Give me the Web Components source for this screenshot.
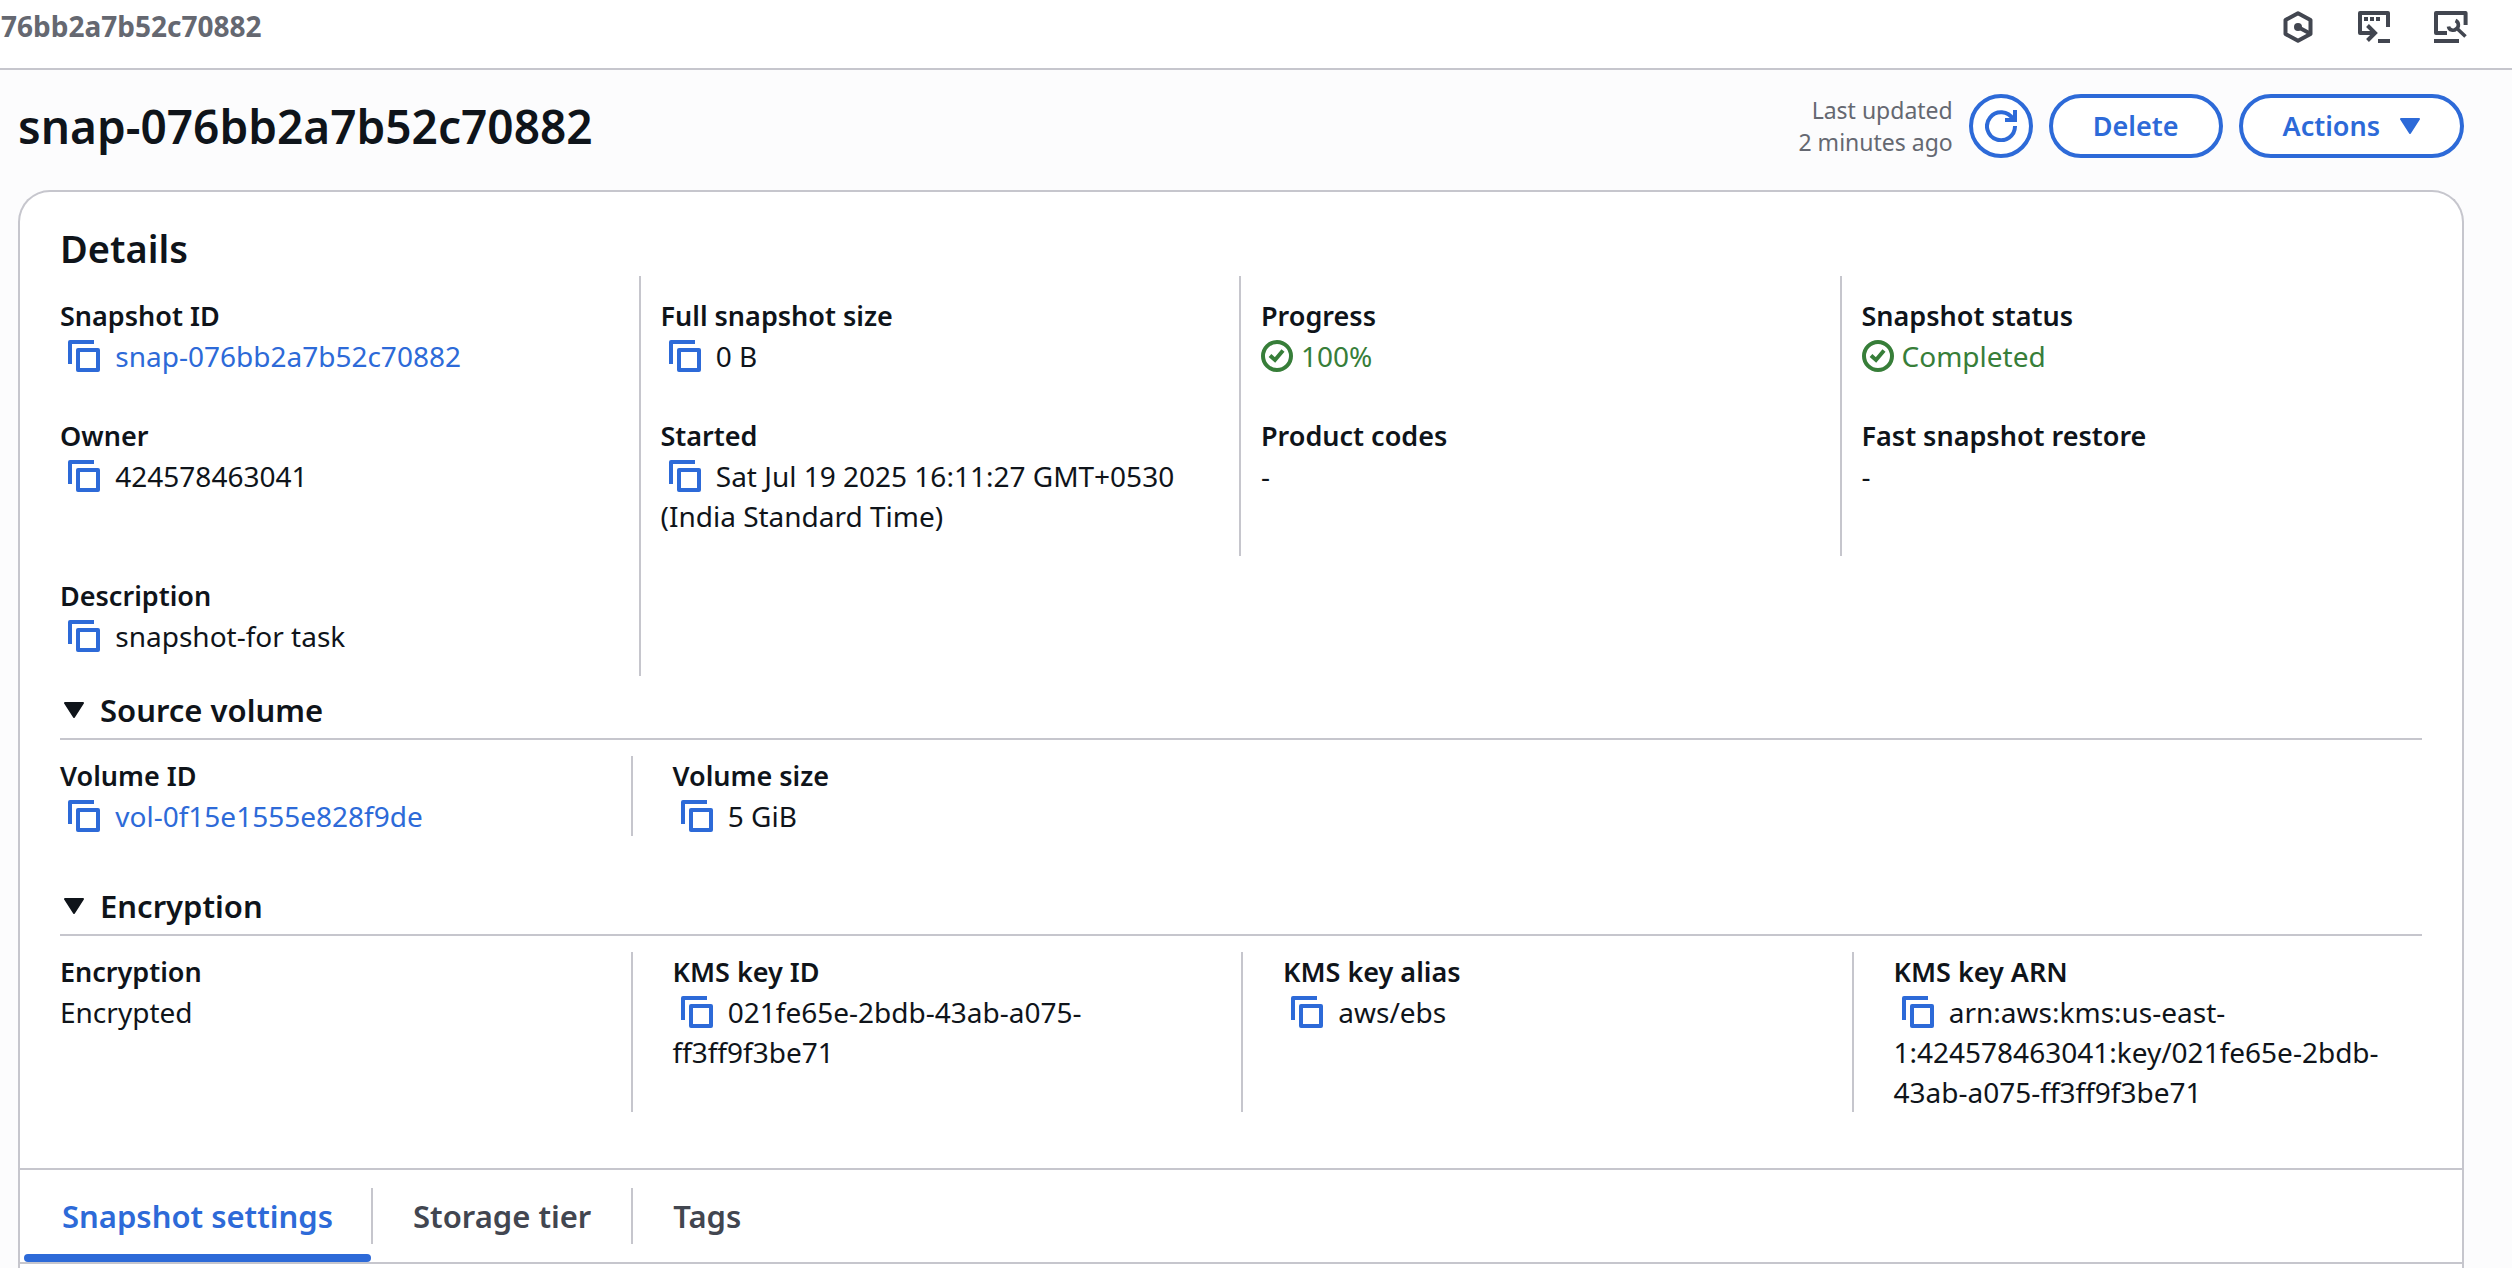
<!DOCTYPE html>
<html lang="en">
<head>
<meta charset="utf-8">
<meta name="viewport" content="width=device-width, initial-scale=1">
<title>snap-076bb2a7b52c70882</title>
<style>
  :root {
    --text: #0f141a;
    --muted: #656871;
    --secondary: #424650;
    --accent: #2d6ad8;
    --success: #377e39;
    --line: #c6c6cd;
    --page: #fcfcfd;
    --bold: 600;
  }
  html { height: 100%; }
  body {
    margin: 0;
    height: 100%;
    overflow: hidden;
    background: var(--page);
    color: var(--text);
    font: 28px/40px "Noto Sans", "Open Sans", sans-serif;
  }
</style>
</head>
<body>
<snapshot-page></snapshot-page>

<script>
const ICONS = {
  copy: '<svg viewBox="0 0 32 32" width="32" height="32" fill="none" stroke="currentColor" stroke-width="4" stroke-linejoin="round"><path d="M2 24V2H26"/><rect x="10" y="10" width="20" height="20"/></svg>',
  check: '<svg viewBox="0 0 32 32" width="32" height="32" fill="none" stroke="currentColor" stroke-width="4"><circle cx="16" cy="16" r="14"/><path d="M9 15.5L14 20L22 10.5"/></svg>',
  refresh: '<svg viewBox="0 0 32 32" width="32" height="32" fill="none" stroke="currentColor" stroke-width="4"><path d="M30 16A14 14 0 1 1 28 9"/><path d="M30 0V10H20"/></svg>',
  caret: '<svg viewBox="0 0 20 16" width="20" height="16" fill="currentColor" stroke="currentColor" stroke-width="2" stroke-linejoin="round"><path d="M1 1H19L10 15Z"/></svg>',
  hexagon: '<svg viewBox="0 0 32 32" width="32" height="32" fill="none" stroke="currentColor" stroke-width="4" stroke-linejoin="round"><path d="M16 2.2L28.5 9V23L16 29.8L3.5 23V9Z"/><path d="M16 16L28 22.5"/><circle cx="16" cy="16" r="4" fill="currentColor" stroke="none"/></svg>',
  shell: '<svg viewBox="0 0 32 32" width="32" height="32" fill="none" stroke="currentColor" stroke-width="4"><path stroke-linejoin="round" d="M30 16V2H2V22H16"/><path d="M9.500 14.500L17 22L9.500 29.500"/><path d="M20 30H32M6 8H10M12 8H16M18 8H22"/></svg>',
  tools: '<svg viewBox="0 0 34 32" width="34" height="32" fill="none" stroke="currentColor" stroke-width="4"><path stroke-linejoin="round" d="M31.600 14V2H2V22H13"/><path d="M0 30H25"/><path stroke-width="3.600" d="M14.500 15.500C15 19.500 20 20.200 22 18C25.500 16 25 11 21.500 9.500M22 16.500L31.500 25.500"/></svg>'
};

class BaseElement extends HTMLElement {
  constructor() {
    super();
    this.attachShadow({ mode: 'open' });
  }
  connectedCallback() {
    this.shadowRoot.innerHTML = '<style>*{box-sizing:border-box}svg{display:block;flex:none}' + this.css() + '</style>' + this.html();
  }
}

customElements.define('top-bar', class extends BaseElement {
  css() {
    return `
      :host { display: flex; justify-content: space-between; height: 70px; box-sizing: border-box; border-bottom: 2px solid var(--line); background: #fff; }
      nav { padding: 6px 0 0 1px; white-space: nowrap; color: var(--muted); font-weight: 700; }
      .tools { display: flex; align-items: flex-start; gap: 44px; padding: 11px 44px 0 0; }
      button { display: block; margin: 0; padding: 0; border: 0; background: none; color: var(--secondary); }`;
  }
  html() {
    return `
      <nav aria-label="Breadcrumb"><span>76bb2a7b52c70882</span></nav>
      <div class="tools">
        <button aria-label="Assistant">${ICONS.hexagon}</button>
        <button aria-label="Shell">${ICONS.shell}</button>
        <button aria-label="Tools">${ICONS.tools}</button>
      </div>`;
  }
});

customElements.define('pill-button', class extends BaseElement {
  css() {
    return `
      :host { display: block; }
      button { display: flex; align-items: center; justify-content: center; gap: 20px; height: 64px; padding: 0 40px; border: 4px solid var(--accent); border-radius: 32px; background: #fff; color: var(--accent); font: inherit; font-size: 27px; font-weight: var(--bold); }
      :host([round]) button { width: 64px; padding: 0; }`;
  }
  html() {
    const icon = this.getAttribute('icon');
    const label = this.getAttribute('label');
    return `<button${label ? ` aria-label="${label}"` : ''}><slot></slot>${icon ? ICONS[icon] : ''}</button>`;
  }
});

customElements.define('page-header', class extends BaseElement {
  css() {
    return `
      :host { display: flex; align-items: center; justify-content: space-between; padding: 24px 48px 32px 18px; }
      h1 { margin: 0; font-size: 46px; line-height: 60px; font-weight: var(--bold); }
      .actions { display: flex; align-items: center; gap: 16px; }
      p { margin: 0; color: var(--muted); font-size: 23px; line-height: 32px; text-align: right; }`;
  }
  html() {
    return `
      <h1><slot></slot></h1>
      <div class="actions">
        <p>Last updated<br>2 minutes ago</p>
        <pill-button round icon="refresh" label="Refresh"></pill-button>
        <pill-button>Delete</pill-button>
        <pill-button icon="caret">Actions</pill-button>
      </div>`;
  }
});

customElements.define('key-value', class extends BaseElement {
  css() {
    return `
      :host { display: block; min-width: 0; }
      .label { font-size: 27px; font-weight: var(--bold); }
      a { color: var(--accent); text-decoration: none; }
      button { display: inline-flex; align-items: center; height: 40px; margin: 0; padding: 0 8px; border: 0; background: none; color: var(--accent); vertical-align: top; }
      .status { display: flex; align-items: center; gap: 8px; color: var(--success); }`;
  }
  html() {
    const kind = this.getAttribute('kind') || '';
    let value = '<slot></slot>';
    if (kind === 'link') value = '<a href="#"><slot></slot></a>';
    if (kind === 'status') value = `<span class="status">${ICONS.check}<slot></slot></span>`;
    if (kind === 'copy' || kind === 'link') value = `<button aria-label="Copy">${ICONS.copy}</button> ${value}`;
    return `<div class="label">${this.getAttribute('label')}</div><div class="value">${value}</div>`;
  }
});

customElements.define('detail-grid', class extends BaseElement {
  css() {
    return `
      :host { display: grid; grid-template-columns: repeat(4, minmax(0, 1fr)); margin: 0 20px; }
      ::slotted(*) { box-sizing: border-box; padding: 20px; border-right: 2px solid var(--line); }
      ::slotted(:nth-child(4n)) { border-right: 0; }`;
  }
  html() { return '<slot></slot>'; }
});

customElements.define('section-columns', class extends BaseElement {
  css() {
    return `
      :host { display: grid; grid-template-columns: repeat(4, minmax(0, 1fr)); }
      ::slotted(*) { box-sizing: border-box; padding: 0 40px; border-left: 2px solid var(--line); }
      ::slotted(:first-child) { border-left: 0; }`;
  }
  html() { return '<slot></slot>'; }
});

customElements.define('expandable-section', class extends BaseElement {
  css() {
    return `
      :host { display: block; }
      summary { display: flex; align-items: center; gap: 16px; margin: 0 40px 16px; padding: 0 0 8px 4px; border-bottom: 2px solid var(--line); list-style: none; }
      h3 { margin: 0; font-size: 31px; line-height: 40px; font-weight: var(--bold); }`;
  }
  html() {
    return `<details open><summary>${ICONS.caret}<h3>${this.getAttribute('heading')}</h3></summary><slot></slot></details>`;
  }
});

customElements.define('tab-strip', class extends BaseElement {
  css() {
    return `
      :host { display: flex; height: 96px; box-sizing: border-box; padding: 0 4px; border-top: 2px solid var(--line); border-bottom: 2px solid var(--line); }
      button { display: flex; flex-direction: column; margin: 0; padding: 18px 0 0; border: 0; background: none; color: var(--secondary); font: inherit; font-size: 31px; font-weight: var(--bold); }
      button span { display: flex; align-items: center; height: 56px; padding: 0 40px; border-right: 2px solid var(--line); }
      button:last-child span { border-right: 0; }
      button[aria-selected=true] { color: var(--accent); }
      button[aria-selected=true] span { padding: 0 38px; }
      button[aria-selected=true]::after { content: ""; align-self: stretch; height: 8px; margin: 10px 2px 0 0; border-radius: 4px; background: var(--accent); }`;
  }
  html() {
    return ['Snapshot settings', 'Storage tier', 'Tags']
      .map((t, i) => `<button role="tab" aria-selected="${i === 0}"><span>${t}</span></button>`).join('');
  }
});

customElements.define('details-card', class extends BaseElement {
  css() {
    return `
      :host { display: block; flex: 1; margin: 0 48px 0 18px; border: 2px solid var(--line); border-bottom: 0; border-radius: 32px 32px 0 0; background: #fff; }
      h2 { margin: 0; padding: 32px 40px 4px; font-size: 38px; line-height: 48px; font-weight: var(--bold); }
      .sections { display: flex; flex-direction: column; gap: 50px; padding: 14px 0 56px; }`;
  }
  html() {
    return `
      <h2>Details</h2>
      <detail-grid>
        <key-value kind="link" label="Snapshot ID">snap-076bb2a7b52c70882</key-value>
        <key-value kind="copy" label="Full snapshot size">0 B</key-value>
        <key-value kind="status" label="Progress">100%</key-value>
        <key-value kind="status" label="Snapshot status">Completed</key-value>
        <key-value kind="copy" label="Owner">424578463041</key-value>
        <key-value kind="copy" label="Started">Sat Jul 19 2025 16:11:27 GMT+0530 (India Standard Time)</key-value>
        <key-value label="Product codes">-</key-value>
        <key-value label="Fast snapshot restore">-</key-value>
        <key-value kind="copy" label="Description">snapshot-for task</key-value>
      </detail-grid>
      <div class="sections">
        <expandable-section heading="Source volume">
          <section-columns>
            <key-value kind="link" label="Volume ID">vol-0f15e1555e828f9de</key-value>
            <key-value kind="copy" label="Volume size">5 GiB</key-value>
          </section-columns>
        </expandable-section>
        <expandable-section heading="Encryption">
          <section-columns>
            <key-value label="Encryption">Encrypted</key-value>
            <key-value kind="copy" label="KMS key ID">021fe65e-2bdb-43ab-a075-ff3ff9f3be71</key-value>
            <key-value kind="copy" label="KMS key alias">aws/ebs</key-value>
            <key-value kind="copy" label="KMS key ARN">arn:aws:kms:us-east-1:424578463041:key/021fe65e-2bdb-43ab-a075-ff3ff9f3be71</key-value>
          </section-columns>
        </expandable-section>
      </div>
      <tab-strip role="tablist"></tab-strip>`;
  }
});

customElements.define('snapshot-page', class extends BaseElement {
  css() { return ':host { display: flex; flex-direction: column; min-height: 100%; }'; }
  html() {
    return `
      <top-bar></top-bar>
      <page-header>snap-076bb2a7b52c70882</page-header>
      <details-card></details-card>`;
  }
});
</script>
</body>
</html>
